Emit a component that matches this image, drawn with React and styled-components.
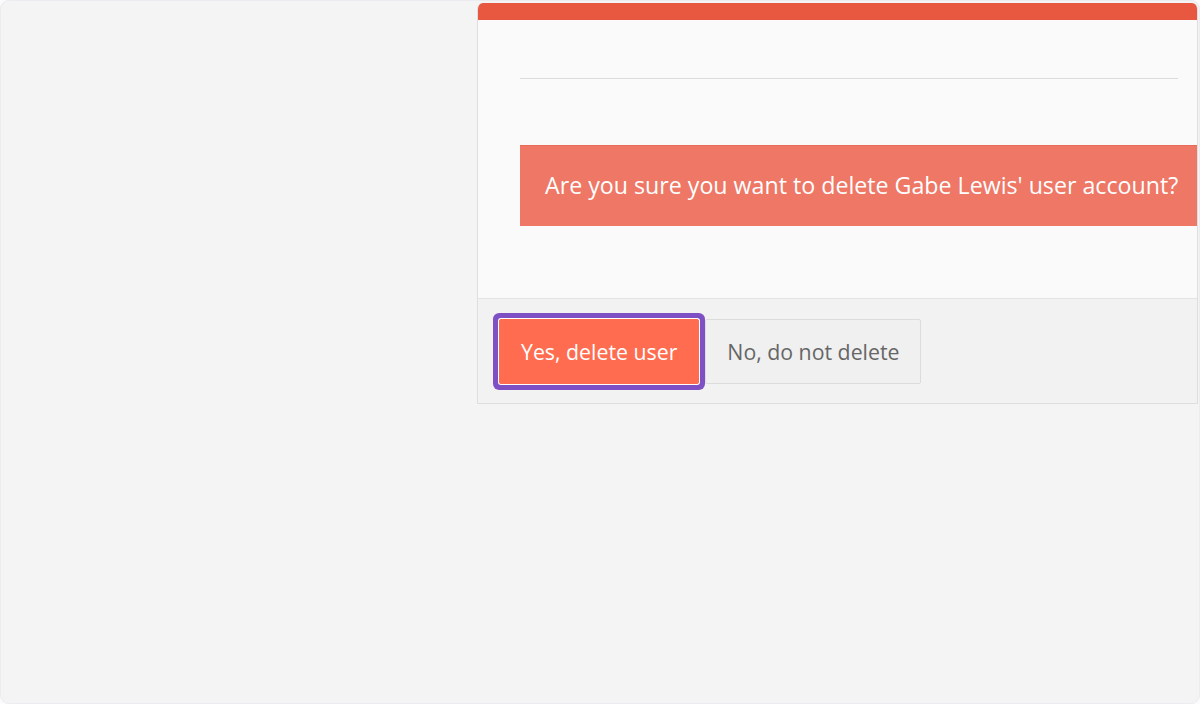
import React from "react";
import styled, { createGlobalStyle } from "styled-components";

const Global = createGlobalStyle`
  html, body { margin: 0; padding: 0; background: #fbfbfd; }
  body { font-family: "Open Sans", "Noto Sans", sans-serif; }
  * { box-sizing: border-box; }
`;

const Frame = styled.div`
  width: 1200px;
  height: 704px;
  background: #f4f4f4;
  border: 1px solid #ebebf0;
  border-radius: 9px;
  overflow: hidden;
  display: flex;
  align-items: flex-start;
  padding: 2px 1px 0 476px;
`;

const Panel = styled.section`
  flex: 1;
  background: #fafafa;
  border: 1px solid #dedede;
  border-top: none;
  border-radius: 6px 6px 0 0;
  overflow: hidden;
`;

const TopBar = styled.div`
  height: 17px;
  background: #e8573f;
  border-left: 1px solid #f05a1e;
  margin-left: -1px;
`;

const Body = styled.div`
  padding: 58px 19px 72px 42px;
`;

const Rule = styled.hr`
  margin: 0;
  border: none;
  border-top: 1px solid #dcdcdc;
`;

const Alert = styled.div`
  margin: 66px -19px 0 0;
  height: 81px;
  background: #ee7766;
  border-top: 1px solid #e86a58;
  color: #fff;
  font-size: 23.2px;
  display: flex;
  align-items: center;
  padding: 0 0 2px 25px;
  white-space: nowrap;
`;

const Footer = styled.div`
  background: #f2f2f2;
  border-top: 1px solid #e3e3e3;
  padding: 20px 21px 19px;
  display: flex;
  align-items: center;
`;

const Button = styled.button`
  font-family: "Open Sans", "Noto Sans", sans-serif;
  font-size: 21.3px;
  height: 65px;
  padding: 0 21px;
  border-radius: 2px;
  cursor: pointer;
  background: ${(p) => (p.$primary ? "#ff6c4f" : "#f0f0f0")};
  color: ${(p) => (p.$primary ? "#ffffff" : "#666666")};
  border: 1px solid ${(p) => (p.$primary ? "#ff6c4f" : "#dcdcdc")};
  box-shadow: ${(p) =>
    p.$focused ? "0 0 0 1px #ffffff, 0 0 0 6px #7f50c4" : "none"};
  ${(p) => (p.$focused ? "position: relative; z-index: 1;" : "")}
  margin-right: ${(p) => (p.$focused ? "6px" : "0")};
`;

export default function App() {
  return (
    <>
      <Global />
      <Frame>
        <Panel>
          <TopBar />
          <Body>
            <Rule />
            <Alert>Are you sure you want to delete Gabe Lewis' user account?</Alert>
          </Body>
          <Footer>
            <Button $primary $focused>Yes, delete user</Button>
            <Button>No, do not delete</Button>
          </Footer>
        </Panel>
      </Frame>
    </>
  );
}
